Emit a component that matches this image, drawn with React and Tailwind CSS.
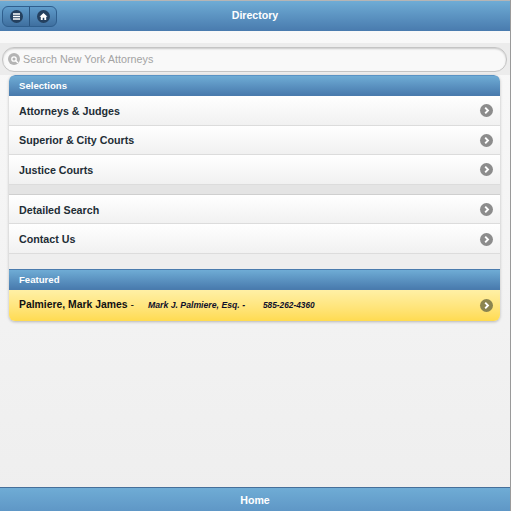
import React from 'react';

const blueBar = 'bg-gradient-to-b from-[#6facd5] to-[#497bae]';
const whiteRow = 'bg-gradient-to-b from-[#ffffff] to-[#f1f1f1]';

function Arrow({ dim }) {
  return (
    <span className={`flex h-[13px] w-[13px] items-center justify-center rounded-full ${dim ? 'bg-[#8a8450]' : 'bg-[#8c8c8c]'}`}>
      <svg width="9" height="9" viewBox="0 0 9 9">
        <path d="M3.2 1.6 L6 4.5 L3.2 7.4" fill="none" stroke="#fff" strokeWidth="1.9" />
      </svg>
    </span>
  );
}

function Row({ label }) {
  return (
    <div className={`flex h-[29.6px] items-center justify-between pl-[10px] pr-[7px] pt-[1px] border-b border-[#dcdcdc] ${whiteRow}`}>
      <span className="text-[10.7px] font-bold text-[#222d35]">{label}</span>
      <Arrow />
    </div>
  );
}

function Divider({ label, first }) {
  return (
    <div className={`flex h-[21px] items-center pl-[10px] pt-[1px] border-y border-[#4a7bad] text-[9.6px] font-bold text-white ${blueBar} ${first ? 'rounded-t-[6px] border-t-[#5a93c4]' : ''}`}>
      {label}
    </div>
  );
}

function RoundIcon({ children }) {
  return (
    <span className="flex h-[13px] w-[13px] items-center justify-center rounded-full bg-[#24405f]">
      {children}
    </span>
  );
}

export default function App() {
  return (
    <div className="flex h-[511px] w-[512px] flex-col bg-white font-['Liberation_Sans',sans-serif]">
      <div className="flex h-[511px] w-[511px] flex-col border-r border-[#9a9a9a] bg-gradient-to-b from-[#f9f9f9] to-[#eeeeee]">
        {/* header */}
        <div className={`relative flex h-[31px] shrink-0 items-center border-t border-[#b5b5b5] border-b-[#3f6d9c] pl-[2px] ${blueBar}`}>
          <div className="flex h-[21px] w-[55px] rounded-[6px] border border-[#2f5f8e] bg-gradient-to-b from-[#5f9ccb] to-[#3f6f9f]">
            <div className="flex w-[27px] items-center justify-center border-r border-[#2a5580]">
              <RoundIcon>
                <svg width="9" height="9" viewBox="0 0 9 9">
                  <path d="M1 2h7M1 4.5h7M1 7h7" stroke="#fff" strokeWidth="1.4" />
                </svg>
              </RoundIcon>
            </div>
            <div className="flex flex-1 items-center justify-center">
              <RoundIcon>
                <svg width="9" height="9" viewBox="0 0 9 9">
                  <path d="M4.5 1 L8.5 4.8 H7.2 V8 H5.3 V5.8 H3.7 V8 H1.8 V4.8 H0.5 Z" fill="#fff" />
                </svg>
              </RoundIcon>
            </div>
          </div>
          <span className="absolute inset-x-0 top-[7px] text-center text-[10.6px] font-bold text-white">Directory</span>
        </div>

        <div className="h-[12px] shrink-0" />

        {/* search */}
        <div className="flex h-[32px] shrink-0 items-center bg-[#ececec] px-[2px]">
          <div className="flex h-[25px] w-[505px] items-center gap-[3px] rounded-[12px] border border-[#c4c4c4] bg-[#f9f9f9] pl-[5px] shadow-[inset_0_1px_2px_rgba(0,0,0,0.2)]">
            <span className="flex h-[12px] w-[12px] items-center justify-center rounded-full bg-[#b4b4b4]">
              <svg width="9" height="9" viewBox="0 0 9 9">
                <circle cx="4" cy="4" r="2.2" fill="none" stroke="#fff" strokeWidth="1.3" />
                <path d="M5.6 5.6 L8 8" stroke="#fff" strokeWidth="1.4" />
              </svg>
            </span>
            <span className="pt-[1px] text-[10.75px] text-[#a3a3a3]">Search New York Attorneys</span>
          </div>
        </div>

        {/* list */}
        <div className="ml-[9px] w-[491px] overflow-hidden rounded-[6px] shadow-[0_1px_3px_rgba(0,0,0,0.25)]">
          <Divider label="Selections" first />
          <Row label="Attorneys & Judges" />
          <Row label="Superior & City Courts" />
          <Row label="Justice Courts" />
          <div className="h-[10px] border-b border-[#cfcfcf] bg-[#e4e4e4]" />
          <Row label="Detailed Search" />
          <Row label="Contact Us" />
          <div className="h-[15px] bg-[#eeeeee]" />
          <Divider label="Featured" />
          <div className="flex h-[31px] items-center justify-between bg-gradient-to-b from-[#fff0a5] to-[#ffdb50] pl-[10px] pr-[7px]">
            <div className="flex items-center text-[#10102a]">
              <span className="w-[129px] pb-[2px] text-[10.4px] font-bold text-[#111]">
                Palmiere, Mark James <span className="font-normal">-</span>
              </span>
              <span className="w-[115px] text-[8.7px] font-bold italic">Mark J. Palmiere, Esq. -</span>
              <span className="text-[8.3px] font-bold italic">585-262-4360</span>
            </div>
            <Arrow dim />
          </div>
        </div>

        <div className="flex-1" />

        {/* footer */}
        <div className="flex h-[24px] shrink-0 items-center justify-center border-t border-[#456f9a] pt-[2px] text-[10.6px] font-bold text-white bg-gradient-to-b from-[#6facd5] to-[#5f97c6]">
          Home
        </div>
      </div>
    </div>
  );
}
